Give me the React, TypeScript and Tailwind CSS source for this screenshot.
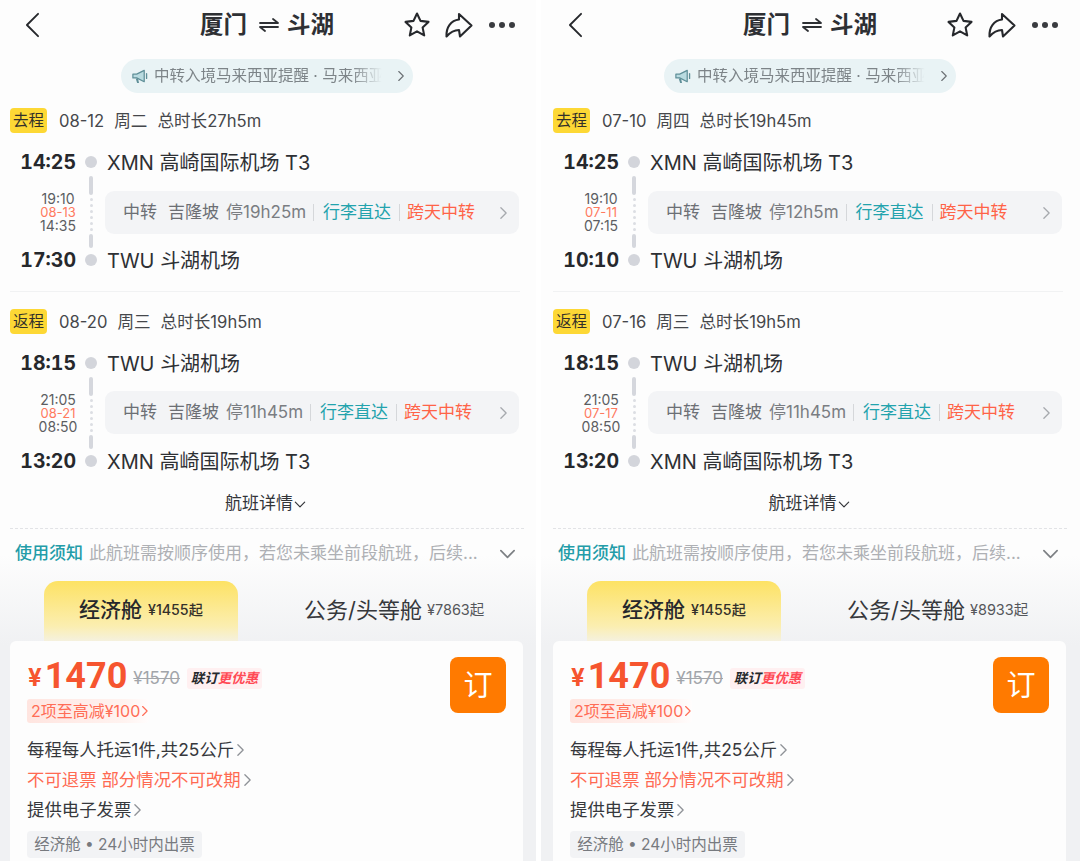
import React from "react";

type Data = {
  date1: string; week1: string; dur1: string;
  t1: string; t2: string;
  m1a: string; m1b: string; m1c: string; stop1: string;
  date2: string; week2: string; dur2: string;
  m2b: string; fare: string;
};

const Chev = ({ cls }: { cls: string }) => (
  <svg viewBox="0 0 10 16" className={cls} fill="none" stroke="currentColor" strokeWidth="1.5" strokeLinecap="round" strokeLinejoin="round">
    <path d="M2 2l6 6-6 6" />
  </svg>
);

const Down = ({ cls }: { cls: string }) => (
  <svg viewBox="0 0 18 10" className={cls} fill="none" stroke="currentColor" strokeWidth="1.8" strokeLinecap="round" strokeLinejoin="round">
    <path d="M2 1.5l7 7 7-7" />
  </svg>
);

const Nav = () => (
  <div className="h-[51px] flex items-center pl-[25px] pb-[2px] text-[#26282c]">
    <svg viewBox="0 0 16 28" className="w-[15px] h-[26px]" fill="none" stroke="currentColor" strokeWidth="2" strokeLinecap="round" strokeLinejoin="round">
      <path d="M14 2L2 14l12 12" />
    </svg>
    <div className="ml-[160px] flex items-center text-[23.5px] leading-none font-semibold text-[#2e3034]">
      <span>厦门</span>
      <svg viewBox="0 0 20 14" className="w-[20px] h-[14px] ml-[12px] mr-[8px]" fill="none" stroke="currentColor" strokeWidth="1.8" strokeLinecap="round" strokeLinejoin="round">
        <path d="M1 5h18L14 1M19 9H1l5 4" />
      </svg>
      <span>斗湖</span>
    </div>
    <svg viewBox="0 0 28 28" className="ml-[69px] w-[28px] h-[28px]" fill="none" stroke="currentColor" strokeWidth="2.1" strokeLinejoin="round">
      <path d="M14 2.5l3.5 7.4 8 1-5.9 5.5 1.6 8-7.2-4-7.2 4 1.6-8-5.9-5.5 8-1z" />
    </svg>
    <svg viewBox="0 0 30 28" className="ml-[12px] w-[30px] h-[28px]" fill="none" stroke="currentColor" strokeWidth="2.1" strokeLinejoin="round">
      <path d="M16 3l12.5 11.5L17 25.5l-1-6.5c-5 0-9 2.5-12.5 6.5C3 16 8 9.5 16 8.5z" />
    </svg>
    <div className="ml-[16px] flex gap-[4px]">
      <span className="w-[6px] h-[6px] rounded-full bg-[#3a3c40]" />
      <span className="w-[6px] h-[6px] rounded-full bg-[#3a3c40]" />
      <span className="w-[6px] h-[6px] rounded-full bg-[#3a3c40]" />
    </div>
  </div>
);

const Notice = () => (
  <div className="mt-[8px] ml-[121px] w-[292px] h-[34px] rounded-full bg-[#e9f3f5] flex items-center pl-[10px] pr-[8px]">
    <svg viewBox="0 0 18 18" className="w-[17px] h-[17px] flex-none" fill="none">
      <path d="M2 6.5h4L14 2.5v12L6 10.5H2z" fill="#b9dbe0" stroke="#5f8f98" strokeWidth="1.3" strokeLinejoin="round" />
      <path d="M5 11l1.5 5h2L7.5 11.5" fill="#5f8f98" />
      <path d="M16.5 6v5" stroke="#5f8f98" strokeWidth="1.4" strokeLinecap="round" />
    </svg>
    <span className="ml-[6px] whitespace-nowrap text-[15.5px] leading-none text-[#7d8488] [mask-image:linear-gradient(90deg,#000_86%,transparent_99%)]">
      中转入境马来西亚提醒 · 马来西亚
    </span>
    <Chev cls="ml-auto w-[8px] h-[12px] text-[#6b7074]" />
  </div>
);

const Head = ({ tag, date, week, dur, top }: { tag: string; date: string; week: string; dur: string; top: string }) => (
  <div className={`${top} ml-[10px] h-[25px] flex items-center text-[16.6px] text-[#45474b] whitespace-nowrap`}>
    <span className="w-[37px] h-[25px] rounded-[4px] bg-[#fdd835] flex items-center justify-center text-[15.5px] text-[#33302a]">{tag}</span>
    <span className="ml-[12px] pt-[2px]">{date}</span>
    <span className="ml-[10px] pt-[2px]">{week}</span>
    <span className="ml-[10px] pt-[2px]">{dur}</span>
  </div>
);

const Row = ({ time, place }: { time: string; place: string }) => (
  <div className="h-[24px] flex items-center whitespace-nowrap">
    <span className="w-[76px] pt-[2px] text-right text-[19.5px] font-bold tabular-nums text-[#26282c]">{time}</span>
    <span className="ml-[9px] w-[12px] h-[12px] rounded-full bg-[#d3d5db]" />
    <span className="ml-[10px] pt-[2px] text-[20px] text-[#2e3034]">{place}</span>
  </div>
);

const Mid = ({ a, b, c, stop, boxTop }: { a: string; b: string; c: string; stop: string; boxTop: string }) => (
  <div className="h-[74px] flex whitespace-nowrap">
    <div className="w-[88px] pl-[28px] flex flex-col items-center justify-center">
      <div className="w-[44px] pt-[3px] text-center text-[14px] leading-[13.5px] text-[#5c5e62]">
        <div>{a}</div>
        <div className="text-[13px] text-[#ff7a5f]">{b}</div>
        <div>{c}</div>
      </div>
    </div>
    <div className="ml-[1px] w-[4px] h-[74px] pt-[2px] flex flex-col items-center gap-[3px]">
      <span className="w-[4px] h-[19px] rounded-[2px] bg-[#d5d7dd]" />
      {[0, 1, 2, 3, 4, 5].map((i) => (
        <span key={i} className="w-[3px] h-[3px] rounded-full bg-[#dcdee3]" />
      ))}
      <span className="w-[4px] h-[14px] rounded-[2px] bg-[#d5d7dd]" />
    </div>
    <div className={`${boxTop} ml-[12px] w-[414px] h-[43px] rounded-[9px] bg-[#f3f4f6] flex items-center pl-[18px] text-[17px]`}>
      <span className="text-[#6c6f74]">中转</span>
      <span className="ml-[11px] text-[#6c6f74]">吉隆坡</span>
      <span className="ml-[7px] text-[#7a7d82]">{stop}</span>
      <span className="ml-[7px] w-px h-[17px] bg-[#d5d7da]" />
      <span className="ml-[9px] text-[#23a3ad]">行李直达</span>
      <span className="ml-[8px] w-px h-[17px] bg-[#d5d7da]" />
      <span className="ml-[7px] text-[#ff6347]">跨天中转</span>
      <Chev cls="ml-auto mr-[11px] w-[9px] h-[14px] text-[#a6a9ae]" />
    </div>
  </div>
);

const Fare = () => (
  <div className="ml-[10px] w-[513px] h-[230px] rounded-t-[6px] bg-[#fdfdfd] pl-[17px] pr-[17px] pt-[16px] whitespace-nowrap">
    <div className="flex items-start justify-between">
      <div>
        <div className="h-[38px] flex items-center">
          <span className="ml-[1px] text-[24px] font-bold text-[#f6552f] leading-none pt-[3px]">¥</span>
          <span className="ml-[3px] font-['Roboto',sans-serif] text-[36px] font-bold text-[#f6552f] leading-none">1470</span>
          <span className="ml-[6px] pt-[5px] text-[17px] leading-none text-[#a2a5aa] line-through">¥1570</span>
          <span className="ml-[7px] mt-[5px] w-[75px] h-[21px] rounded-[3px] bg-[#fff0f1] flex items-center justify-center text-[13.5px] font-bold italic leading-none">
            <span className="text-[#26282c]">联订</span>
            <span className="text-[#ff4a55]">更优惠</span>
          </span>
        </div>
        <div className="mt-[4px] w-[122px] h-[24px] rounded-[3px] bg-[linear-gradient(90deg,#ffe5e0,#fff3f0_80%,#fffdfd)] flex items-center pl-[4px] text-[16px] text-[#ff6d56] leading-none">
          2项至高减¥100
          <Chev cls="ml-[1px] w-[8px] h-[12px]" />
        </div>
      </div>
      <div className="w-[56px] h-[56px] rounded-[8px] bg-[#ff7a00] flex items-center justify-center text-[29px] text-white leading-none">订</div>
    </div>
    <div className="pt-[12px] text-[17.4px] leading-[30px]">
      <div className="flex items-center text-[#36383c]">每程每人托运1件,共25公斤<Chev cls="ml-[2px] w-[9px] h-[14px] text-[#8f9297]" /></div>
      <div className="flex items-center text-[#ff6a52]">不可退票 部分情况不可改期<Chev cls="ml-[2px] w-[9px] h-[14px] text-[#8f9297]" /></div>
      <div className="flex items-center text-[#36383c]">提供电子发票<Chev cls="ml-[2px] w-[9px] h-[14px] text-[#8f9297]" /></div>
    </div>
    <div className="mt-[6px] w-[175px] h-[27px] rounded-[4px] bg-[#f2f3f5] flex items-center justify-center text-[15.5px] text-[#777a7f] leading-none">经济舱 • 24小时内出票</div>
  </div>
);

const Pane = ({ data, cls }: { data: Data; cls: string }) => (
  <div className={`${cls} h-[861px] flex-none overflow-hidden bg-[linear-gradient(180deg,#fdfdfd_555px,#f0f1f3_645px)]`}>
    <Nav />
    <Notice />
    <Head tag="去程" date={data.date1} week={data.week1} dur={data.dur1} top="mt-[15px]" />
    <div className="mt-[17px]">
      <Row time="14:25" place="XMN 高崎国际机场 T3" />
      <Mid a={data.m1a} b={data.m1b} c={data.m1c} stop={data.stop1} boxTop="mt-[17px]" />
      <Row time={data.t2} place="TWU 斗湖机场" />
    </div>
    <div className="mt-[19px] ml-[10px] w-[510px] h-px bg-[#f1f2f3]" />
    <Head tag="返程" date={data.date2} week={data.week2} dur={data.dur2} top="mt-[17px]" />
    <div className="mt-[17px]">
      <Row time="18:15" place="TWU 斗湖机场" />
      <Mid a="21:05" b={data.m2b} c="08:50" stop="停11h45m" boxTop="mt-[16px]" />
      <Row time="13:20" place="XMN 高崎国际机场 T3" />
    </div>
    <div className="mt-[18px] h-[24px] pt-[2px] flex items-center justify-center pr-[5px] text-[17px] text-[#333539]">
      航班详情
      <Down cls="ml-[1px] w-[12px] h-[7px]" />
    </div>
    <div className="mt-[13px] ml-[10px] w-[514px] border-t border-dashed border-[#e2e3e6]" />
    <div className="mt-[12px] h-[24px] pt-[2px] ml-[15px] w-[502px] flex items-center whitespace-nowrap">
      <span className="text-[17px] font-medium text-[#239ca8]">使用须知</span>
      <span className="ml-[6px] text-[17px] text-[#aeb0b4]">此航班需按顺序使用，若您未乘坐前段航班，后续...</span>
      <Down cls="ml-auto mr-[1px] w-[17px] h-[10px] text-[#7d8084]" />
    </div>
    <div className="mt-[16px] h-[60px] flex whitespace-nowrap">
      <div className="ml-[44px] w-[194px] h-[60px] rounded-t-[14px] bg-[linear-gradient(180deg,#fde264,#fbeeb0_75%,#f5f1de)] flex items-center pl-[35px] pb-[2px]">
        <span className="text-[21px] font-medium text-[#26282c]">经济舱</span>
        <span className="ml-[6px] text-[14.2px] font-medium text-[#33302a]">¥1455起</span>
      </div>
      <div className="ml-[66px] flex items-center pb-[2px]">
        <span className="text-[22px] text-[#36383c]">公务/头等舱</span>
        <span className="ml-[5px] text-[14.5px] text-[#55575b]">{data.fare}</span>
      </div>
    </div>
    <Fare />
  </div>
);

const left: Data = {
  date1: "08-12", week1: "周二", dur1: "总时长27h5m", t1: "14:25", t2: "17:30",
  m1a: "19:10", m1b: "08-13", m1c: "14:35", stop1: "停19h25m",
  date2: "08-20", week2: "周三", dur2: "总时长19h5m", m2b: "08-21", fare: "¥7863起",
};
const right: Data = {
  date1: "07-10", week1: "周四", dur1: "总时长19h45m", t1: "14:25", t2: "10:10",
  m1a: "19:10", m1b: "07-11", m1c: "07:15", stop1: "停12h5m",
  date2: "07-16", week2: "周三", dur2: "总时长19h5m", m2b: "07-17", fare: "¥8933起",
};

export default function App() {
  return (
    <div className="w-[1080px] h-[861px] overflow-hidden bg-white flex font-['Inter','Noto_Sans_CJK_SC',sans-serif]">
      <Pane data={left} cls="w-[536px]" />
      <div className="w-[5px] flex-none bg-white" />
      <Pane data={right} cls="w-[539px] pl-[2px]" />
    </div>
  );
}
